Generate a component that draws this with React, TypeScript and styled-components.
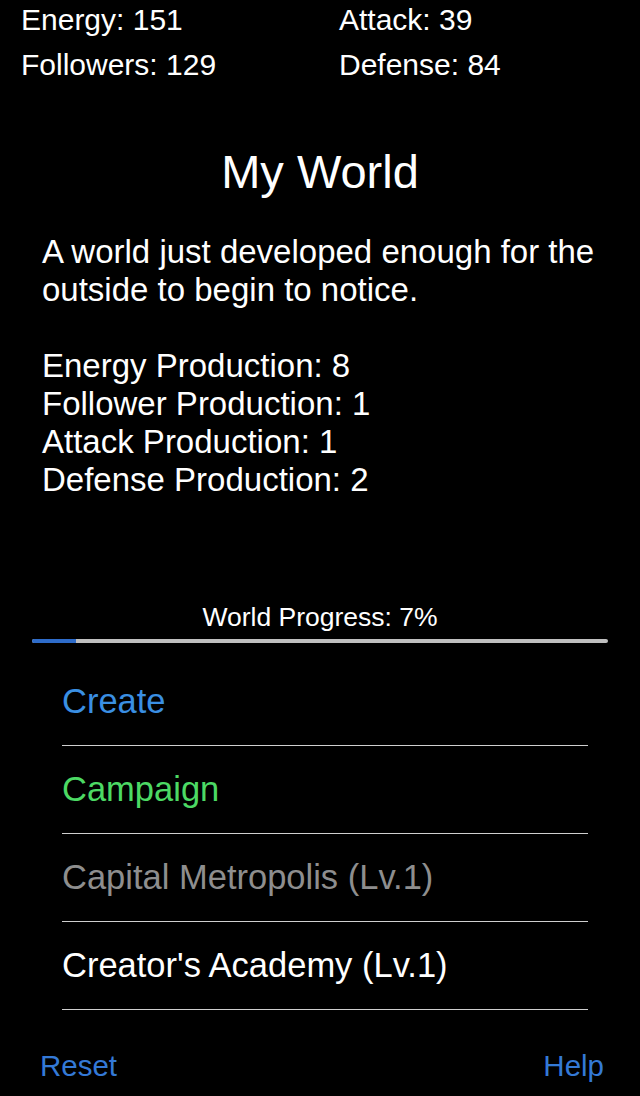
import React from 'react';
import styled, { createGlobalStyle } from 'styled-components';

const GlobalStyle = createGlobalStyle`
  html, body {
    margin: 0;
    padding: 0;
    background: #000;
  }
  body {
    font-family: "Liberation Sans", Arial, sans-serif;
    color: #fff;
  }
`;

const Screen = styled.div`
  width: 640px;
  height: 1096px;
  background: #000;
  display: flex;
  flex-direction: column;
  overflow: hidden;
`;

const StatsGrid = styled.div`
  display: grid;
  grid-template-columns: 318px 1fr;
  row-gap: 5px;
  padding-left: 21px;
  font-size: 30px;
  line-height: 40px;
`;

const Stat = styled.div`
  white-space: nowrap;
`;

const Title = styled.h1`
  margin: 59px 0 0;
  font-size: 47px;
  font-weight: normal;
  line-height: 56px;
  text-align: center;
`;

const Description = styled.div`
  margin-top: 33px;
  padding: 0 20px 0 42px;
  font-size: 33px;
  line-height: 38px;
`;

const Paragraph = styled.p`
  margin: 0 0 38px;
`;

const ProductionList = styled.div`
  display: flex;
  flex-direction: column;
`;

const ProgressLabel = styled.div`
  margin-top: 102px;
  font-size: 26.5px;
  line-height: 32px;
  text-align: center;
`;

const ProgressTrack = styled.div`
  margin: 6px 32px 0;
  height: 4px;
  border-radius: 2px;
  background: #bfbfbf;
  overflow: hidden;
`;

const ProgressFill = styled.div`
  height: 100%;
  min-width: 44px;
  background: #2e6cca;
`;

const MenuList = styled.ul`
  list-style: none;
  margin: 15px 52px 0 62px;
  padding: 0;
`;

const MenuItem = styled.li<{ $tone: string }>`
  height: 87px;
  display: flex;
  align-items: center;
  border-bottom: 1px solid #cfcfcf;
  font-size: 34.5px;
  color: ${(p) => p.$tone};
  white-space: nowrap;
`;

const Footer = styled.div`
  margin-top: 36px;
  padding: 0 36px 0 40px;
  display: flex;
  justify-content: space-between;
  font-size: 29.5px;
  line-height: 40px;
`;

const FooterLink = styled.span`
  color: #3479d6;
`;

const stats = ['Energy: 151', 'Attack: 39', 'Followers: 129', 'Defense: 84'];

const production = [
  'Energy Production: 8',
  'Follower Production: 1',
  'Attack Production: 1',
  'Defense Production: 2',
];

const menu = [
  { label: 'Create', tone: '#3a8fe3' },
  { label: 'Campaign', tone: '#4cd964' },
  { label: 'Capital Metropolis (Lv.1)', tone: '#8e8e8e' },
  { label: "Creator's Academy (Lv.1)", tone: '#ffffff' },
];

const progress = 7;

export default function App() {
  return (
    <Screen>
      <GlobalStyle />
      <StatsGrid>
        {stats.map((s) => (
          <Stat key={s}>{s}</Stat>
        ))}
      </StatsGrid>
      <Title>My World</Title>
      <Description>
        <Paragraph>A world just developed enough for the outside to begin to notice.</Paragraph>
        <ProductionList>
          {production.map((p) => (
            <div key={p}>{p}</div>
          ))}
        </ProductionList>
      </Description>
      <ProgressLabel>World Progress: {progress}%</ProgressLabel>
      <ProgressTrack>
        <ProgressFill style={{ width: `${progress}%` }} />
      </ProgressTrack>
      <MenuList>
        {menu.map((m) => (
          <MenuItem key={m.label} $tone={m.tone}>
            {m.label}
          </MenuItem>
        ))}
      </MenuList>
      <Footer>
        <FooterLink>Reset</FooterLink>
        <FooterLink>Help</FooterLink>
      </Footer>
    </Screen>
  );
}
